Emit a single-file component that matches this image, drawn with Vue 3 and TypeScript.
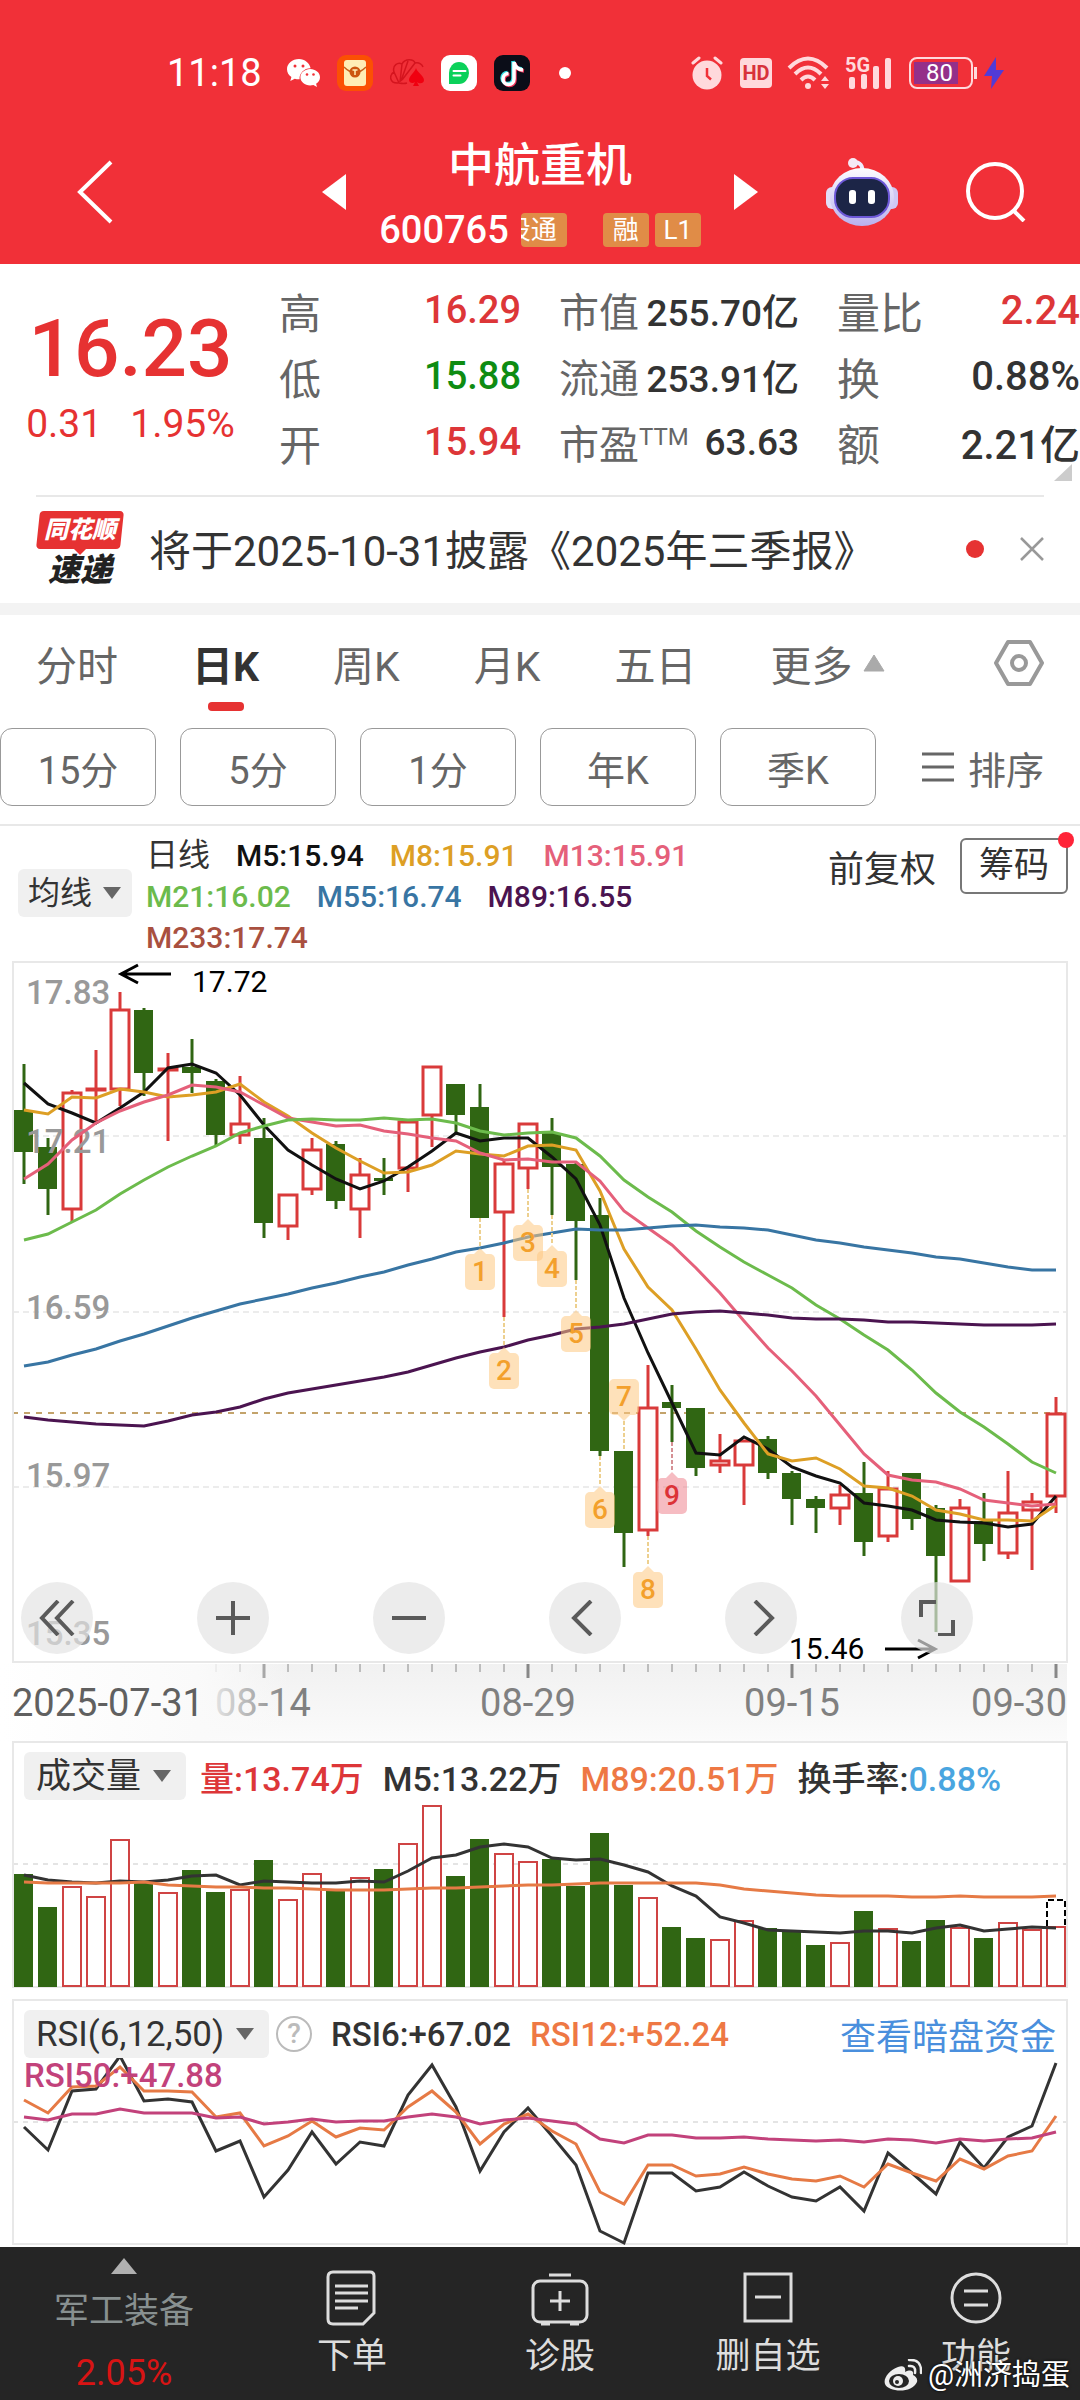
<script setup lang="ts">
import { ref } from 'vue'

type Candle = ['u' | 'd', number, number, number, number]

// direction, high, body top, body bottom, low (chart units)
const candles: Candle[] = [
  ['d', 102, 148, 190, 222], ['d', 176, 185, 227, 253], ['u', 128, 130, 248, 260], ['u', 88, 126, 129, 161],
  ['u', 30, 47, 128, 144], ['d', 46, 48, 111, 134], ['u', 91, 106, 109, 179], ['d', 77, 105, 111, 131],
  ['d', 117, 119, 173, 184], ['u', 114, 161, 174, 182], ['d', 156, 176, 261, 276], ['u', 232, 232, 265, 278],
  ['u', 176, 187, 228, 233], ['d', 179, 182, 239, 247], ['u', 196, 212, 248, 276], ['d', 196, 216, 219, 233],
  ['u', 158, 159, 207, 230], ['u', 104, 104, 154, 185], ['d', 122, 122, 153, 173], ['d', 122, 145, 256, 256],
  ['u', 198, 201, 251, 355], ['u', 161, 161, 207, 227], ['d', 156, 171, 205, 253], ['d', 201, 202, 259, 318],
  ['d', 236, 253, 489, 494], ['d', 489, 489, 571, 605], ['u', 403, 445, 569, 574], ['d', 423, 440, 446, 480],
  ['d', 446, 446, 506, 514], ['u', 472, 498, 504, 511], ['u', 478, 478, 504, 543], ['d', 474, 477, 511, 517],
  ['d', 509, 511, 537, 563], ['d', 534, 537, 546, 571], ['u', 523, 532, 547, 563], ['d', 500, 531, 580, 594],
  ['u', 509, 526, 575, 580], ['d', 511, 511, 557, 568], ['d', 543, 546, 594, 670], ['u', 537, 545, 620, 620],
  ['d', 531, 559, 582, 599], ['u', 509, 550, 592, 597], ['u', 531, 539, 549, 608], ['u', 435, 451, 535, 551],
]

const averages = [
  { color: '#111', y: [121, 142, 151, 161, 146, 130, 106, 102, 111, 133, 163, 188, 203, 217, 227, 219, 205, 189, 171, 179, 176, 176, 195, 217, 263, 336, 391, 441, 491, 493, 475, 487, 505, 514, 521, 541, 544, 548, 558, 560, 561, 565, 562, 534] },
  { color: '#dd9f25', y: [148, 152, 135, 136, 127, 130, 135, 133, 130, 122, 140, 154, 171, 186, 199, 211, 210, 203, 189, 192, 194, 184, 183, 188, 229, 287, 325, 348, 387, 428, 461, 492, 499, 496, 507, 524, 526, 534, 548, 552, 558, 558, 559, 543] },
  { color: '#e5607a', y: [217, 202, 178, 161, 149, 140, 133, 123, 125, 130, 143, 156, 160, 164, 163, 169, 172, 176, 179, 191, 198, 197, 200, 200, 219, 249, 266, 283, 306, 331, 359, 386, 409, 434, 463, 492, 513, 518, 520, 527, 538, 541, 544, 542] },
  { color: '#6cbb4c', y: [278, 272, 260, 248, 232, 218, 205, 194, 184, 171, 164, 158, 157, 158, 158, 156, 158, 157, 161, 169, 173, 171, 170, 176, 194, 218, 235, 250, 269, 285, 300, 313, 326, 343, 357, 373, 388, 408, 431, 450, 465, 482, 500, 511] },
  { color: '#3875a3', y: [404, 400, 393, 387, 379, 372, 364, 356, 349, 342, 337, 332, 326, 321, 315, 310, 303, 297, 290, 286, 281, 275, 271, 267, 268, 268, 266, 264, 263, 265, 266, 268, 273, 278, 281, 285, 288, 291, 295, 297, 301, 305, 308, 308] },
  { color: '#4b1450', y: [455, 458, 460, 462, 463, 464, 459, 453, 450, 445, 437, 431, 427, 423, 419, 415, 410, 403, 396, 390, 385, 378, 373, 367, 365, 362, 357, 352, 350, 349, 351, 353, 356, 357, 357, 358, 360, 360, 361, 362, 363, 363, 363, 362] },
]

const volumeTops = [132, 165, 144, 154, 97, 141, 150, 128, 150, 147, 118, 157, 131, 149, 135, 127, 101, 63, 134, 97, 111, 119, 117, 144, 91, 143, 155, 185, 196, 197, 178, 186, 190, 203, 200, 169, 186, 199, 178, 185, 196, 180, 187, 184]
const volumeLines = [
  { color: '#333', y: [133, 138, 140, 141, 139, 140, 138, 134, 133, 143, 139, 140, 141, 141, 139, 140, 129, 116, 113, 105, 102, 105, 116, 118, 117, 123, 130, 144, 154, 175, 181, 188, 189, 190, 191, 189, 189, 191, 186, 183, 189, 187, 185, 186] },
  { color: '#e67a45', y: [140, 141, 141, 141, 141, 140, 143, 144, 145, 145, 146, 146, 147, 148, 148, 148, 147, 146, 146, 145, 144, 143, 143, 142, 141, 141, 141, 141, 141, 143, 147, 149, 151, 153, 154, 154, 154, 155, 155, 154, 155, 155, 155, 154] },
]
const rsiLines = [
  { color: '#333', y: [127, 150, 91, 89, 56, 101, 99, 102, 151, 141, 197, 170, 132, 164, 142, 146, 95, 65, 107, 171, 132, 108, 136, 165, 231, 243, 173, 173, 191, 187, 172, 186, 197, 201, 187, 211, 153, 173, 194, 142, 168, 137, 126, 63] },
  { color: '#e67a45', y: [100, 113, 87, 86, 67, 91, 91, 92, 117, 113, 146, 136, 121, 137, 128, 130, 107, 91, 112, 144, 124, 114, 131, 144, 192, 204, 165, 165, 176, 174, 167, 174, 179, 181, 176, 187, 164, 173, 181, 159, 169, 156, 151, 116] },
  { color: '#c2427b', y: [117, 120, 114, 114, 109, 113, 113, 113, 118, 117, 124, 122, 119, 122, 121, 121, 117, 114, 117, 124, 120, 118, 121, 124, 139, 143, 135, 135, 138, 138, 137, 139, 140, 141, 140, 142, 139, 140, 143, 139, 141, 139, 138, 132] },
]

// n: label, i: candle index, y: top of the badge
const markers = [
  { n: 1, i: 19, y: 292 }, { n: 2, i: 20, y: 391 }, { n: 3, i: 21, y: 263 }, { n: 4, i: 22, y: 289 },
  { n: 5, i: 23, y: 354 }, { n: 6, i: 24, y: 530 }, { n: 7, i: 25, y: 417 }, { n: 8, i: 26, y: 610 }, { n: 9, i: 27, y: 516 },
]

const priceLabels = [
  { t: '17.83', y: 42 }, { t: '17.21', y: 191 }, { t: '16.59', y: 357 }, { t: '15.97', y: 525 }, { t: '15.35', y: 683 },
]
const ticks = Array.from({ length: 36 }, (_, k) => k + 8)

const cx = (i: number) => 24 + 24 * i
const points = (ys: number[]) => ys.map((y, i) => `${cx(i)},${y}`).join(' ')

const legend = [
  [{ t: '日线', c: '#333' }, { t: 'M5:15.94', c: '#111' }, { t: 'M8:15.91', c: '#dd9f25' }, { t: 'M13:15.91', c: '#e5607a' }],
  [{ t: 'M21:16.02', c: '#6cbb4c' }, { t: 'M55:16.74', c: '#3875a3' }, { t: 'M89:16.55', c: '#4b1450' }],
  [{ t: 'M233:17.74', c: '#a9503f' }],
]
const quotes = [
  [{ k: '高', v: '16.29', c: 'up' }, { k: '低', v: '15.88', c: 'down' }, { k: '开', v: '15.94', c: 'up' }],
  [{ k: '市值', v: '255.70亿', c: '' }, { k: '流通', v: '253.91亿', c: '' }, { k: '市盈', v: '63.63', c: '', sup: 'TTM' }],
  [{ k: '量比', v: '2.24', c: 'up' }, { k: '换', v: '0.88%', c: '' }, { k: '额', v: '2.21亿', c: '' }],
]
const tabs = ['分时', '日K', '周K', '月K', '五日']
const activeTab = ref('日K')
const periods = ['15分', '5分', '1分', '年K', '季K']
</script>

<template>
  <div class="page">
    <header class="top">
      <div class="status">
        <span class="time">11:18</span>
        <svg class="s-wechat" viewBox="0 0 33 28" width="33" height="28">
          <path fill="#fff" d="M12 0C5.300 0 0 4.500 0 10.200c0 3.200 1.700 6 4.400 7.900L3.300 22l4.500-2.300c1.300.4 2.700.6 4.200.6h.6C12 14 17.500 9 23.600 9.200 22.500 4 17.800 0 12 0z" />
          <path fill="#fff" d="M33 18.300c0-4.600-4.500-8.200-9.800-8.200s-9.800 3.600-9.800 8.200 4.400 8.200 9.800 8.200c1.100 0 2.200-.2 3.200-.5l3.600 2-.9-3.200c2.400-1.500 3.900-3.900 3.900-6.500z" />
          <g fill="#f13038"><circle cx="8" cy="7" r="1.500" /><circle cx="16" cy="7" r="1.500" /><circle cx="20" cy="15.500" r="1.300" /><circle cx="26.500" cy="15.500" r="1.300" /></g>
        </svg>
        <svg viewBox="0 0 36 36" width="36" height="36">
          <rect width="36" height="36" rx="9" fill="#fb5004" /><rect x="7" y="5" width="22" height="26" rx="3" fill="#ffedb5" />
          <path d="M7 12q5 5 11 6q6-1 11-6" fill="none" stroke="#c6601c" stroke-width="1.500" /><circle cx="18" cy="17" r="5.500" fill="#cc560f" /><path d="M15.500 15h5M18 15v5" stroke="#ffedb5" stroke-width="1.500" />
        </svg>
        <svg viewBox="0 0 34 30" width="34" height="30">
          <path d="M9 25C-1 26-1 17 4 14C2 7 8 4 12 6C15 0 24 1 25 5C30 4 32 7 33 9M9 25L4 14M10 24L12 6M11 23L18 3M12 22L25 5M9 25Q14 26 17 25" fill="none" stroke="#d4141e" stroke-width="1.500" />
          <path d="M26 10c1 4 8 8 8 12 0 4-5 4-7 2l2 4h-6l2-4c-2 2-6 1-6-2 0-4 6-8 7-12z" fill="#f00010" />
        </svg>
        <svg viewBox="0 0 36 36" width="36" height="36">
          <rect width="36" height="36" rx="9" fill="#fff" /><path d="M8 29V18a10 11 0 1 1 10 11z" fill="#0bd15a" /><path d="M12.500 16h12M12.500 20.500h7" stroke="#fff" stroke-width="2" stroke-linecap="round" />
        </svg>
        <svg viewBox="0 0 36 36" width="36" height="36">
          <rect width="36" height="36" rx="9" fill="#0b0d18" />
          <g fill="none" stroke-width="3.500"><path d="M19 6v17a5.500 5.500 0 1 1-5.500-5.500M19 6q1 7 9 8" stroke="#35dfe6" /><path d="M21 8v17a5.500 5.500 0 1 1-5.500-5.500M21 8q1 7 9 8" stroke="#f1355b" /><path d="M20 7v17a5.500 5.500 0 1 1-5.500-5.500M20 7q1 7 9 8" stroke="#fff" /></g>
        </svg>
        <i class="s-dot"></i>
        <span class="spacer"></span>
        <svg viewBox="0 0 32 34" width="32" height="34">
          <circle cx="16" cy="19" r="14.500" fill="#ffd9dc" /><path d="M2 7l6-5M30 7l-6-5" stroke="#ffd9dc" stroke-width="3" stroke-linecap="round" /><path d="M16 12v8l4 3.500" fill="none" stroke="#f13038" stroke-width="2.500" />
        </svg>
        <span class="hd">HD</span>
        <svg class="wifi" viewBox="0 0 46 34" width="46" height="34" fill="none" stroke="#ffd9dc" stroke-width="4">
          <path d="M2 12Q21-7 40 12M8 18Q21 5 34 18M14 24Q21 17 28 24" /><circle cx="21" cy="30" r="3" fill="#ffd9dc" stroke="none" /><path d="M34 25l4-5 4 5zM34 28l4 5 4-5z" fill="#ffd9dc" stroke="none" />
        </svg>
        <span class="signal">
          <b>5G</b>
          <svg viewBox="0 0 46 34" width="46" height="34" fill="#ffd9dc"><rect x="3" y="21" width="6" height="12" rx="2" /><rect x="15" y="18" width="6" height="15" rx="2" /><rect x="27" y="10" width="6" height="23" rx="2" /><rect x="39" y="2" width="6" height="31" rx="2" /></svg>
        </span>
        <span class="battery"><b>80</b></span>
        <svg class="bolt" viewBox="0 0 20 32" width="20" height="32"><path d="M12 0L0 19h8L7 32 20 13h-8z" fill="#513bd6" /></svg>
      </div>
      <div class="titlebar">
        <button class="back" aria-label="返回"><svg viewBox="0 0 36 64" width="36" height="64"><path d="M34 2L3 32L34 62" fill="none" stroke="#fff" stroke-width="4" /></svg></button>
        <div class="stock">
          <button aria-label="上一只"><svg viewBox="0 0 24 36" width="24" height="36"><path d="M24 0v36L0 18z" fill="#fff" /></svg></button>
          <div class="names">
            <h1>中航重机</h1>
            <div class="code"><span>600765</span><span class="tag cut"><span>股通</span></span><span class="tag rong">融</span><span class="tag">L1</span></div>
          </div>
          <button aria-label="下一只"><svg viewBox="0 0 24 36" width="24" height="36"><path d="M0 0v36l24-18z" fill="#fff" /></svg></button>
        </div>
        <div class="tools">
          <button aria-label="助手">
            <svg viewBox="0 0 72 70" width="72" height="70">
              <defs><linearGradient id="bot" x1="0" y1="0" x2="0" y2="1"><stop offset="0" stop-color="#fdfcff" /><stop offset="1" stop-color="#b9b0ee" /></linearGradient></defs>
              <path d="M36 16Q38 5 27 5" fill="none" stroke="#f0ecff" stroke-width="4" /><circle cx="27" cy="6" r="5" fill="#f5e9f5" />
              <rect x="0" y="30" width="14" height="22" rx="6" fill="#e2def8" /><rect x="58" y="30" width="14" height="22" rx="6" fill="#cfc8f4" />
              <ellipse cx="36" cy="40" rx="32" ry="29" fill="url(#bot)" /><rect x="9" y="21" width="54" height="39" rx="18" fill="#1c2547" stroke="#6d58d8" stroke-width="2" />
              <rect x="23" y="33" width="7" height="14" rx="3" fill="#fff" /><rect x="42" y="33" width="7" height="14" rx="3" fill="#fff" />
            </svg>
          </button>
          <button aria-label="搜索"><svg viewBox="0 0 60 60" width="60" height="60" fill="none" stroke="#fff" stroke-width="4"><circle cx="29" cy="29" r="27" /><path d="M47 48l11 11" /></svg></button>
        </div>
      </div>
    </header>

    <section class="quote">
      <div class="price"><strong>16.23</strong><p><span>0.31</span><span>1.95%</span></p></div>
      <dl v-for="(col, n) in quotes" :key="n" :class="'q' + n">
        <div v-for="q in col" :key="q.k"><dt>{{ q.k }}<sup v-if="'sup' in q">{{ q.sup }}</sup></dt><dd :class="q.c">{{ q.v }}</dd></div>
      </dl>
      <i class="corner"></i>
    </section>

    <section class="notice">
      <div class="logo"><b><span>同花顺</span></b><em>速递</em></div>
      <a href="#">将于2025-10-31披露《2025年三季报》</a>
      <i class="dot"></i>
      <button aria-label="关闭"><svg viewBox="0 0 24 24" width="24" height="24"><path d="M1 1l22 22M23 1L1 23" stroke="#999" stroke-width="2.500" /></svg></button>
    </section>

    <nav class="tabs">
      <button v-for="t in tabs" :key="t" :class="{ on: t === activeTab }" @click="activeTab = t">{{ t }}</button>
      <button class="more">更多<svg viewBox="0 0 22 18" width="22" height="18"><path d="M11 1l10 16H1z" fill="#aaa" stroke="#aaa" stroke-linejoin="round" /></svg></button>
      <button class="gear" aria-label="设置"><svg viewBox="0 0 50 46" width="50" height="46" fill="none" stroke="#999" stroke-width="4" stroke-linejoin="round"><path d="M14 2h22l12 21-12 21H14L2 23z" /><circle cx="25" cy="23" r="7" /></svg></button>
    </nav>

    <div class="periods">
      <button v-for="p in periods" :key="p" class="pill">{{ p }}</button>
      <button class="sort"><svg viewBox="0 0 32 30" width="32" height="30"><path d="M0 2h32M0 15h32M0 28h32" stroke="#666" stroke-width="3" /></svg>排序</button>
    </div>

    <section class="legend">
      <label class="drop ma"><select aria-label="均线"><option>均线</option></select><svg viewBox="0 0 20 14" width="20" height="14"><path d="M1 1h18l-9 12z" fill="#666" /></svg></label>
      <div class="values">
        <p v-for="(row, n) in legend" :key="n"><span v-for="l in row" :key="l.t" :style="{ color: l.c }">{{ l.t }}</span></p>
      </div>
      <button class="adjust">前复权</button>
      <button class="chips">筹码<i></i></button>
    </section>

    <section class="kline">
      <svg class="plot" viewBox="0 0 1080 702">
        <g fill="none" stroke="#d9d9d9" stroke-width="1" stroke-dasharray="6 4"><path d="M13 174H1066M13 350H1066M13 525H1066" /></g>
        <path d="M12 451H1066" stroke="#c3a36b" stroke-width="2" stroke-dasharray="6 6" />
        <rect x="13" y="0" width="1054" height="700" fill="none" stroke="#e8e8e8" stroke-width="2" />
        <g v-for="(c, i) in candles" :key="i">
          <template v-if="c[0] === 'd'">
            <path :d="`M${cx(i)} ${c[1]}V${c[4]}`" stroke="#306613" stroke-width="3" />
            <rect :x="cx(i) - 10" :y="c[2]" width="19" :height="c[3] - c[2]" fill="#306613" />
          </template>
          <g v-else stroke="#d93a3a" stroke-width="3">
            <path :d="`M${cx(i)} ${c[1]}V${c[2]}M${cx(i)} ${c[3]}V${c[4]}`" />
            <rect :x="cx(i) - 9" :y="c[2] + 1" width="18" :height="Math.max(c[3] - c[2] - 2, 1)" fill="#fff" />
          </g>
        </g>
        <g fill="#999" class="axis"><text v-for="l in priceLabels" :key="l.t" x="26" :y="l.y">{{ l.t }}</text></g>
        <polyline v-for="m in averages" :key="m.color" :points="points(m.y)" fill="none" :stroke="m.color" stroke-width="3" />
        <g v-for="m in markers" :key="m.n" class="mark">
          <path v-if="m.n === 7" :d="`M${cx(m.i)} 459V489`" stroke="#edd08f" stroke-width="2" stroke-dasharray="4 2" />
          <path v-else :d="`M${cx(m.i)} ${candles[m.i][4]}V${m.y - 6}`" :stroke="m.n === 9 ? '#d59094' : '#edd08f'" stroke-width="2" stroke-dasharray="4 2" />
          <path v-if="m.n === 7" :d="`M${cx(m.i) - 6} 453l6 6 6-6z`" fill="#fdc882" opacity=".55" />
          <path v-else :d="`M${cx(m.i) - 6} ${m.y}l6-6 6 6z`" :fill="m.n === 9 ? '#ee8590' : '#fdc882'" opacity=".55" />
          <rect :x="cx(m.i) - 15" :y="m.y" width="30" height="36" rx="5" :fill="m.n === 9 ? '#ee8590' : '#fdc882'" opacity=".55" />
          <text :x="cx(m.i)" :y="m.y + 27" text-anchor="middle" :fill="m.n === 9 ? '#dc3237' : '#f3a02c'">{{ m.n }}</text>
        </g>
        <g fill="none" stroke="#000" stroke-width="3"><path d="M171 12H121M138 3L121 12L138 21" /><path d="M885 687H935M918 678L935 687L918 696" /></g>
        <g class="extreme"><text x="192" y="30">17.72</text><text x="789" y="697">15.46</text></g>
      </svg>
      <div class="controls">
        <button aria-label="展开"><svg viewBox="0 0 36 36"><path d="M19 1L3 18l16 17M34 1L18 18l16 17" /></svg></button>
        <button aria-label="放大"><svg viewBox="0 0 36 36"><path d="M1 18h34M18 1v34" /></svg></button>
        <button aria-label="缩小"><svg viewBox="0 0 36 36"><path d="M1 18h34" /></svg></button>
        <button aria-label="左移"><svg viewBox="0 0 36 36"><path d="M24 1L7 18l17 17" /></svg></button>
        <button aria-label="右移"><svg viewBox="0 0 36 36"><path d="M12 1l17 17-17 17" /></svg></button>
        <button aria-label="全屏"><svg viewBox="0 0 36 36"><path d="M17 2H2v15M19 35h15V20" /></svg></button>
      </div>
    </section>

    <svg class="plot dates" viewBox="0 0 1080 78">
      <defs>
        <linearGradient id="axisbg" x1="0" y1="0" x2="0" y2="1"><stop offset="0" stop-color="#f1f1f1" /><stop offset="1" stop-color="#fbfbfb" /></linearGradient>
        <linearGradient id="fade"><stop offset="0" stop-color="#fff" /><stop offset=".68" stop-color="#fafafa" /><stop offset="1" stop-color="#fafafa" stop-opacity="0" /></linearGradient>
      </defs>
      <rect x="13" y="0" width="1054" height="78" fill="url(#axisbg)" />
      <path v-for="k in ticks" :key="k" :d="`M${cx(k)} 0v${(k - 10) % 11 ? 8 : 14}`" stroke="#888" :stroke-width="(k - 10) % 11 ? 1 : 3" />
      <g fill="#808080"><text x="215" y="52">08-14</text><text x="528" y="52" text-anchor="middle">08-29</text><text x="792" y="52" text-anchor="middle">09-15</text><text x="1067" y="52" text-anchor="end">09-30</text></g>
      <rect x="0" y="0" width="290" height="78" fill="url(#fade)" />
      <text x="12" y="52" fill="#606060">2025-07-31</text>
    </svg>

    <section class="panel">
      <svg class="plot" viewBox="0 0 1080 258">
        <path d="M13 122H1066" stroke="#e4e4e4" stroke-width="2" stroke-dasharray="5 5" />
        <path d="M13 245V0H1067V245z" fill="none" stroke="#e8e8e8" stroke-width="2" />
        <template v-for="(v, i) in volumeTops" :key="i">
          <rect v-if="candles[i][0] === 'd'" :x="cx(i) - 10" :y="v" width="19" :height="245 - v" fill="#306613" />
          <rect v-else :x="cx(i) - 9" :y="v + 1" width="18" :height="243 - v" fill="#fff" stroke="#cf4444" stroke-width="2" />
        </template>
        <path d="M1047 184V158H1065V184" fill="none" stroke="#000" stroke-width="2" stroke-dasharray="6 3" />
        <polyline v-for="l in volumeLines" :key="l.color" :points="points(l.y)" fill="none" :stroke="l.color" stroke-width="3" />
      </svg>
      <div class="info">
        <label class="drop"><select aria-label="成交量"><option>成交量</option></select><svg viewBox="0 0 20 14" width="20" height="14"><path d="M1 1h18l-9 12z" fill="#666" /></svg></label>
        <span class="first up">量:13.74万</span><span>M5:13.22万</span><span class="orange">M89:20.51万</span><span>换手率:<span class="sky">0.88%</span></span>
      </div>
    </section>

    <section class="panel rsi">
      <svg class="plot" viewBox="0 0 1080 247">
        <path d="M13 122H1066" stroke="#e4e4e4" stroke-width="2" stroke-dasharray="5 5" />
        <rect x="13" y="0" width="1054" height="244" fill="none" stroke="#e8e8e8" stroke-width="2" />
        <polyline v-for="l in rsiLines" :key="l.color" :points="points(l.y)" fill="none" :stroke="l.color" stroke-width="3" />
      </svg>
      <div class="info">
        <label class="drop"><select aria-label="RSI"><option>RSI(6,12,50)</option></select><svg viewBox="0 0 20 14" width="20" height="14"><path d="M1 1h18l-9 12z" fill="#666" /></svg></label>
        <button class="help" aria-label="说明">?</button>
        <span>RSI6:+67.02</span><span class="orange">RSI12:+52.24</span><a href="#">查看暗盘资金</a>
      </div>
      <div class="rsi50">RSI50:+47.88</div>
    </section>

    <footer class="bottom">
      <button class="sector">
        <svg viewBox="0 0 26 16" width="26" height="16"><path d="M13 0l13 16H0z" fill="#b0b0b0" /></svg>
        <span>军工装备</span><b>2.05%</b>
      </button>
      <button>
        <svg viewBox="0 0 58 56" width="58" height="56"><path d="M10 2h37q4 0 4 4v37L40 54H10q-5 0-5-5V7q0-5 5-5z" /><path d="M12 16h33M12 23h33M12 31h33M12 38h23" /></svg><span>下单</span>
      </button>
      <button>
        <svg viewBox="0 0 58 56" width="58" height="56"><rect x="2" y="11" width="54" height="41" rx="7" /><path d="M18 5h22M29 21v20M19 31h20M10 54h9M39 54h9" /></svg><span>诊股</span>
      </button>
      <button>
        <svg viewBox="0 0 58 56" width="58" height="56"><rect x="6" y="4" width="46" height="47" /><path d="M16 27h26" /></svg><span>删自选</span>
      </button>
      <button>
        <svg viewBox="0 0 58 56" width="58" height="56"><circle cx="29" cy="28" r="24" /><path d="M17 21h24M17 35h24" /></svg><span>功能</span>
      </button>
      <div class="mark-wb">
        <svg viewBox="0 0 38 32" width="38" height="32">
          <path d="M14 8C5 11-1 20 1 25c3 8 27 10 32-2 1-4-2-6-4-7 1-4-2-6-8-3 1-4-1-7-7-5z" fill="#eee" /><ellipse cx="15" cy="22" rx="10" ry="7" fill="#252525" /><circle cx="14" cy="22" r="5" fill="#eee" /><circle cx="13" cy="23" r="2" fill="#252525" />
          <path d="M25 7q7-1 6 7M25 1q13-1 12 13" fill="none" stroke="#eee" stroke-width="2.500" stroke-linecap="round" />
        </svg>
        <span>@洲济捣蛋</span>
      </div>
    </footer>
  </div>
</template>

<style>
body {
  background: #fff;
}
</style>

<style scoped>
.page {
  font-family: Roboto, "Noto Sans CJK SC", sans-serif;
  color: #333;
  background: #fff;
}
.page * {
  box-sizing: border-box;
}
button, select {
  font: inherit;
  color: inherit;
  background: none;
  border: 0;
  padding: 0;
  margin: 0;
}
button svg {
  display: block;
}
p, h1, dl, dd {
  margin: 0;
}
a {
  color: inherit;
  text-decoration: none;
}
.plot {
  display: block;
  width: 100%;
  overflow: visible;
}
.up { color: #dd3638; }
.down { color: #0e8c12; }
.orange { color: #ee7844; }
.sky { color: #49a5e0; }

.top {
  background: #f13038;
  color: #fff;
  height: 264px;
}
.status {
  display: flex;
  align-items: center;
  gap: 17px;
  height: 120px;
  padding: 26px 76px 0 167px;
}
.time {
  font-size: 38px;
  margin-right: 8px;
}
.s-dot {
  width: 12px;
  height: 12px;
  margin-left: 12px;
  border-radius: 50%;
  background: #fff;
}
.spacer { flex: 1; }
.hd {
  width: 32px;
  height: 30px;
  border-radius: 4px;
  background: #ffd9dc;
  color: #d8323a;
  font-size: 20px;
  font-weight: 700;
  line-height: 30px;
  text-align: center;
}
.wifi { margin: 0 -4px 0 -2px; }
.signal {
  position: relative;
  height: 34px;
}
.signal b {
  position: absolute;
  left: -1px;
  top: -1px;
  font-size: 20px;
  line-height: 20px;
  color: #ffd9dc;
}
.battery {
  position: relative;
  width: 64px;
  height: 32px;
  padding: 3px;
  border: 2px solid #ffd9dc;
  border-radius: 8px;
}
.battery::after {
  content: "";
  position: absolute;
  right: -6px;
  top: 8px;
  width: 3px;
  height: 12px;
  background: #ffd9dc;
}
.battery b {
  display: block;
  width: 44px;
  height: 22px;
  background: #943089;
  font-size: 24px;
  font-weight: 400;
  line-height: 22px;
  padding-left: 12px;
}
.bolt { margin-left: -6px; }

.titlebar {
  display: grid;
  grid-template-columns: 1fr 436px 1fr;
  align-items: center;
  height: 144px;
}
.back {
  justify-self: start;
  margin-left: 77px;
}
.stock {
  display: flex;
  align-items: center;
  justify-content: space-between;
}
.names {
  display: flex;
  flex-direction: column;
  align-items: center;
  padding-top: 7px;
}
h1 {
  font-size: 46px;
  font-weight: 500;
  line-height: 68px;
}
.code {
  display: flex;
  align-items: center;
  gap: 6px;
  font-size: 38px;
  font-weight: 500;
  line-height: 62px;
}
.tag {
  height: 34px;
  width: 46px;
  border-radius: 4px;
  background: #e08c47;
  font-size: 26px;
  font-weight: 400;
  line-height: 34px;
  text-align: center;
  white-space: nowrap;
}
.cut {
  display: flex;
  justify-content: flex-end;
  overflow: hidden;
  margin-left: 6px;
  padding-right: 10px;
}
.cut span { flex: none; }
.rong { margin-left: 30px; }
.tools {
  display: flex;
  align-items: center;
  justify-content: flex-end;
  gap: 68px;
  padding-right: 54px;
}

.quote {
  position: relative;
  display: grid;
  grid-template-columns: 261fr 260fr 278fr 281fr;
  height: 231px;
  padding-top: 13px;
}
.price {
  text-align: center;
  color: #e63232;
}
.price strong {
  display: block;
  font-size: 80px;
  font-weight: 500;
  line-height: 112px;
  padding-top: 16px;
}
.price p {
  display: flex;
  justify-content: center;
  gap: 28px;
  font-size: 39px;
  line-height: 38px;
}
.quote dl div {
  display: flex;
  justify-content: space-between;
  align-items: center;
  height: 66px;
}
.quote dt {
  color: #666;
  font-size: 42px;
}
.quote dd {
  font-size: 38px;
  font-weight: 500;
}
.q0 { padding-left: 18px; }
.q1, .q2 { padding-left: 38px; }
.q1 dt { font-size: 40px; }
.q1 dd { font-size: 37px; }
.q2 dt { font-size: 43px; }
.q2 dd { font-size: 40px; }
.quote sup {
  font-size: 24px;
  line-height: 24px;
}
.corner {
  position: absolute;
  right: 8px;
  top: 200px;
  border-left: 18px solid transparent;
  border-bottom: 17px solid #ccc;
}

.notice {
  display: flex;
  align-items: center;
  height: 120px;
  margin: 0;
  padding: 0 36px;
  border-bottom: 12px solid #f3f3f3;
  background: linear-gradient(#e8e8e8, #e8e8e8) center top / calc(100% - 72px) 2px no-repeat;
}
.logo {
  width: 88px;
  margin-right: 25px;
  text-align: center;
}
.logo b {
  position: relative;
  z-index: 0;
  display: block;
  height: 38px;
  color: #fff;
  font-size: 24px;
  font-weight: 900;
  font-style: italic;
  line-height: 38px;
}
.logo b::before {
  content: "";
  position: absolute;
  z-index: -1;
  inset: 0 2px;
  border-radius: 4px;
  background: #e63232;
  transform: skewX(-6deg);
}
.logo b::after {
  content: "";
  position: absolute;
  left: 38px;
  top: 38px;
  border: 6px solid transparent;
  border-top-color: #e63232;
  border-bottom: 0;
}
.logo em {
  display: block;
  color: #222;
  font-size: 32px;
  font-weight: 900;
  line-height: 36px;
  padding-top: 3px;
}
.notice a {
  flex: 1;
  padding-bottom: 4px;
  font-size: 42px;
  white-space: nowrap;
}
.dot {
  width: 18px;
  height: 18px;
  margin-right: 36px;
  border-radius: 50%;
  background: #e63232;
}

.tabs {
  display: flex;
  align-items: flex-start;
  height: 114px;
  padding: 0 36px;
  color: #666;
  font-size: 41px;
}
.tabs button {
  position: relative;
  height: 96px;
  margin-right: 74px;
}
.tabs .on {
  color: #333;
  font-weight: 700;
}
.tabs .on::after {
  content: "";
  position: absolute;
  left: 50%;
  bottom: 0;
  width: 36px;
  height: 9px;
  margin-left: -18px;
  border-radius: 4px;
  background: #e63232;
}
.tabs .more {
  display: flex;
  align-items: center;
  gap: 10px;
}
.tabs .gear {
  margin: 0 0 0 auto;
}

.periods {
  display: flex;
  align-items: center;
  gap: 24px;
  height: 97px;
  padding-bottom: 19px;
  border-bottom: 2px solid #e8e8e8;
  color: #666;
  font-size: 38px;
}
.pill {
  flex: 0 1 156px;
  height: 78px;
  border: 1px solid #999;
  border-radius: 12px;
}
.sort {
  display: flex;
  align-items: center;
  gap: 14px;
  margin: 0 36px 0 auto;
}

.legend {
  display: flex;
  align-items: flex-start;
  height: 136px;
  padding: 9px 12px 0 18px;
}
.drop {
  display: flex;
  align-items: center;
  gap: 10px;
  height: 48px;
  padding: 0 14px 0 12px;
  border-radius: 6px;
  background: #f0f0f0;
}
.drop select {
  appearance: none;
  outline: 0;
}
.ma {
  width: 114px;
  margin: 34px 14px 0 0;
  padding: 0 10px;
  font-size: 32px;
}
.ma select { width: 64px; }
.values {
  flex: 1;
  font-size: 30px;
  font-weight: 500;
  line-height: 41px;
}
.values p {
  display: flex;
  gap: 26px;
}
.values p:first-child span:first-child {
  font-size: 32px;
  font-weight: 400;
}
.adjust {
  height: 54px;
  margin: 4px 24px 0 0;
  font-size: 36px;
}
.chips {
  position: relative;
  width: 108px;
  height: 56px;
  margin-top: 3px;
  border: 2px solid #777;
  border-radius: 6px;
  font-size: 35px;
  line-height: 50px;
}
.chips i {
  position: absolute;
  right: -8px;
  top: -8px;
  width: 16px;
  height: 16px;
  border-radius: 50%;
  background: #ff2438;
}

.kline { position: relative; }
.axis {
  font-size: 33px;
  font-weight: 500;
}
.mark {
  font-size: 28px;
  font-weight: 500;
}
.extreme { font-size: 30px; }
.controls {
  position: absolute;
  left: 21px;
  right: 107px;
  bottom: 10px;
  display: flex;
  justify-content: space-between;
}
.controls button {
  display: flex;
  align-items: center;
  justify-content: center;
  width: 72px;
  height: 72px;
  border-radius: 50%;
  background: rgba(227, 227, 227, .68);
}
.controls svg {
  width: 36px;
  height: 36px;
  fill: none;
  stroke: #5a5a5a;
  stroke-width: 4;
}
.dates {
  font-size: 38px;
}

.panel { position: relative; }
.info {
  position: absolute;
  left: 24px;
  right: 24px;
  top: 10px;
  display: flex;
  align-items: center;
  gap: 19px;
  height: 48px;
  font-size: 34px;
  font-weight: 500;
  white-space: nowrap;
}
.info .drop {
  font-size: 35px;
  font-weight: 400;
}
.info .first { margin-left: -5px; }
.info a {
  margin-left: auto;
  color: #4a8fdd;
  font-size: 36px;
  font-weight: 400;
}
.rsi .info span { font-size: 33px; }
.help {
  width: 36px;
  height: 36px;
  margin-left: -12px;
  border: 2px solid #bbb;
  border-radius: 50%;
  color: #bbb;
  font-size: 28px;
  line-height: 32px;
}
.rsi50 {
  position: absolute;
  left: 24px;
  top: 56px;
  font-size: 33px;
  font-weight: 500;
  line-height: 40px;
  color: #c2427b;
}

.bottom {
  position: relative;
  display: grid;
  grid-template-columns: 248fr 208fr 208fr 208fr 208fr;
  height: 153px;
  background: #252525;
  color: #ddd;
  font-size: 35px;
}
.bottom button {
  display: flex;
  flex-direction: column;
  align-items: center;
  gap: 8px;
  padding-top: 23px;
  line-height: 46px;
}
.bottom button svg {
  fill: none;
  stroke: #ddd;
  stroke-width: 3;
}
.bottom .sector {
  gap: 15px;
  padding-top: 11px;
  color: #889090;
}
.bottom .sector svg { stroke: none; }
.sector b {
  color: #d81414;
  font-size: 36px;
  font-weight: 400;
}
.mark-wb {
  position: absolute;
  right: 10px;
  bottom: 4px;
  display: flex;
  align-items: center;
  gap: 6px;
  color: #fff;
  font-size: 29px;
  line-height: 42px;
  text-shadow: 0 0 3px #000;
}
</style>
